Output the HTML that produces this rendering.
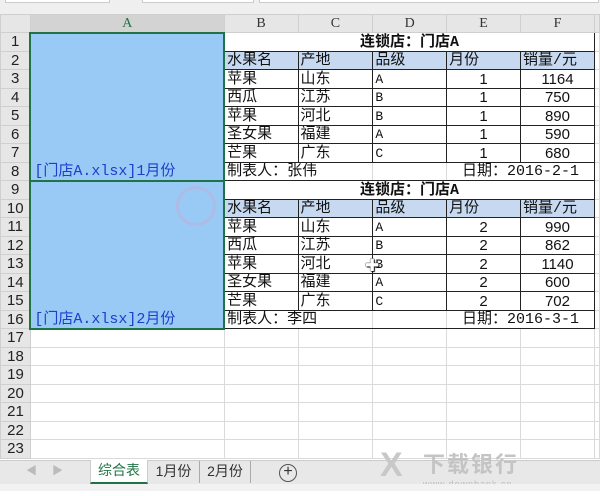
<!DOCTYPE html>
<html><head><meta charset="utf-8"><style>
*{margin:0;padding:0;box-sizing:border-box}
body{width:600px;height:491px;overflow:hidden;background:#fff;position:relative;font-family:"Liberation Mono","Noto Sans CJK SC",monospace;font-size:15px;color:#111}
#top{position:absolute;left:0;top:0;width:600px;height:14px;background:#efefef}
#top div{position:absolute;top:0;height:3px;background:#fff;border:1px solid #ccc;border-top:none}
table{position:absolute;left:0;top:14px;border-collapse:collapse;table-layout:fixed}
td{height:18.5px;border:1px solid #dadada;padding:1px 2px 0;white-space:nowrap;overflow:hidden;line-height:15px;vertical-align:middle}
td *{line-height:15px}
tr.h td{height:18px;background:#e6e6e6;text-align:center;font-family:"Liberation Serif",serif;font-size:14px;color:#333;border-color:#cfcfcf;padding:0}
td.rh{background:#e6e6e6;text-align:center;font-family:"Liberation Sans",sans-serif;font-size:15px;color:#222;border-color:#cfcfcf;padding:0}
td.sel{background:#99c9f5;border:2px solid #217346;vertical-align:bottom;color:#1c3fcc;padding:0 2px 1px 3px}
td.b{border:1px solid #222}
td.hd{background:#c6d9f1}
td.t{text-align:center;font-weight:bold}
td.n{text-align:center;font-family:"Liberation Sans",sans-serif}
td.l{font-family:"Liberation Mono",monospace;font-size:13px}
td.bt{border-top:1.5px solid #222}
td.br{border-right:1.5px solid #222}
td.bl{border-left:1.5px solid #222}
#tabs{position:absolute;left:0;top:460px;width:600px;height:24px;background:#e8e8e8;border-top:1px solid #ccc;font-family:"Liberation Sans","Noto Sans CJK SC",sans-serif;font-size:14px;color:#333}
#tabs span{position:absolute;top:0;height:22px;line-height:20px;text-align:center}
#status{position:absolute;left:0;top:484px;width:600px;height:7px;background:#f2f2f2}
</style></head><body>
<div id="top"><div style="left:5px;width:105px"></div><div style="left:142px;width:112px"></div><div style="left:259px;width:340px"></div></div>
<table>
<colgroup><col style="width:30px"><col style="width:194px"><col style="width:74px"><col style="width:75px"><col style="width:74px"><col style="width:74px"><col style="width:74px"><col style="width:5px"></colgroup>
<tr class="h"><td></td><td style="background:#d3d3d3;color:#217346;border-bottom:2px solid #217346">A</td><td>B</td><td>C</td><td>D</td><td>E</td><td>F</td><td></td></tr>
<tr><td class="rh">1</td><td class="sel" rowspan="8">[门店A.xlsx]1月份</td><td class="t bl br bt" colspan="5" style="border-bottom:1px solid #222">连锁店：门店A</td><td></td></tr>
<tr><td class="rh">2</td><td class="b hd bl">水果名</td><td class="b hd">产地</td><td class="b hd">品级</td><td class="b hd">月份</td><td class="b hd br">销量/元</td><td></td></tr>
<tr><td class="rh">3</td><td class="b bl">苹果</td><td class="b">山东</td><td class="b l">A</td><td class="b n">1</td><td class="b n br">1164</td><td></td></tr>
<tr><td class="rh">4</td><td class="b bl">西瓜</td><td class="b">江苏</td><td class="b l">B</td><td class="b n">1</td><td class="b n br">750</td><td></td></tr>
<tr><td class="rh">5</td><td class="b bl">苹果</td><td class="b">河北</td><td class="b l">B</td><td class="b n">1</td><td class="b n br">890</td><td></td></tr>
<tr><td class="rh">6</td><td class="b bl">圣女果</td><td class="b">福建</td><td class="b l">A</td><td class="b n">1</td><td class="b n br">590</td><td></td></tr>
<tr><td class="rh">7</td><td class="b bl">芒果</td><td class="b">广东</td><td class="b l">C</td><td class="b n">1</td><td class="b n br">680</td><td></td></tr>
<tr><td class="rh">8</td><td class="bl" colspan="2" style="border-bottom:1px solid #222">制表人：张伟</td><td style="border-bottom:1px solid #222"></td><td class="br" colspan="2" style="text-align:center;border-bottom:1px solid #222">日期：2016-2-1</td><td></td></tr>
<tr><td class="rh">9</td><td class="sel" rowspan="8">[门店A.xlsx]2月份</td><td class="t bl br bt" colspan="5" style="border-bottom:1px solid #222">连锁店：门店A</td><td></td></tr>
<tr><td class="rh">10</td><td class="b hd bl">水果名</td><td class="b hd">产地</td><td class="b hd">品级</td><td class="b hd">月份</td><td class="b hd br">销量/元</td><td></td></tr>
<tr><td class="rh">11</td><td class="b bl">苹果</td><td class="b">山东</td><td class="b l">A</td><td class="b n">2</td><td class="b n br">990</td><td></td></tr>
<tr><td class="rh">12</td><td class="b bl">西瓜</td><td class="b">江苏</td><td class="b l">B</td><td class="b n">2</td><td class="b n br">862</td><td></td></tr>
<tr><td class="rh">13</td><td class="b bl">苹果</td><td class="b">河北</td><td class="b l">B</td><td class="b n">2</td><td class="b n br">1140</td><td></td></tr>
<tr><td class="rh">14</td><td class="b bl">圣女果</td><td class="b">福建</td><td class="b l">A</td><td class="b n">2</td><td class="b n br">600</td><td></td></tr>
<tr><td class="rh">15</td><td class="b bl">芒果</td><td class="b">广东</td><td class="b l">C</td><td class="b n">2</td><td class="b n br">702</td><td></td></tr>
<tr><td class="rh">16</td><td class="bl" colspan="2" style="border-bottom:1.5px solid #222">制表人：李四</td><td style="border-bottom:1.5px solid #222"></td><td class="br" colspan="2" style="text-align:center;border-bottom:1.5px solid #222">日期：2016-3-1</td><td></td></tr>
<tr><td class="rh">17</td><td></td><td></td><td></td><td></td><td></td><td></td><td></td></tr>
<tr><td class="rh">18</td><td></td><td></td><td></td><td></td><td></td><td></td><td></td></tr>
<tr><td class="rh">19</td><td></td><td></td><td></td><td></td><td></td><td></td><td></td></tr>
<tr><td class="rh">20</td><td></td><td></td><td></td><td></td><td></td><td></td><td></td></tr>
<tr><td class="rh">21</td><td></td><td></td><td></td><td></td><td></td><td></td><td></td></tr>
<tr><td class="rh">22</td><td></td><td></td><td></td><td></td><td></td><td></td><td></td></tr>
<tr><td class="rh">23</td><td></td><td></td><td></td><td></td><td></td><td></td><td></td></tr>
</table>
<div style="position:absolute;left:176px;top:186px;width:40px;height:40px;border-radius:50%;border:3px solid rgba(200,170,210,.45)"></div>
<div style="position:absolute;left:365px;top:256px;font-size:17px;color:#fff;text-shadow:0 0 1px #000,0 0 1px #000,1px 1px 1px #000;font-family:'DejaVu Sans',sans-serif;font-weight:bold">✚</div>
<div id="tabs">
<span style="left:26px;color:#bbb;font-size:11px">◀</span><span style="left:52px;color:#bbb;font-size:11px">▶</span>
<span style="left:90px;width:58px;background:#fff;color:#217346;border-bottom:2px solid #217346;border-left:1px solid #ccc;border-right:1px solid #ccc;top:-1px;height:24px">综合表</span>
<span style="left:148px;width:52px;border-right:1px solid #aaa">1月份</span>
<span style="left:200px;width:51px;border-right:1px solid #aaa">2月份</span>
<span style="left:279px;top:3px;width:18px;height:18px;border:1.5px solid #555;border-radius:50%;line-height:14px;font-size:16px">+</span>
<span style="left:380px;top:-6px;font-size:34px;color:#c8c8c8;font-weight:bold">X</span>
<span style="left:423px;top:-6px;font-size:22px;color:#c4c4c4;font-weight:bold;letter-spacing:2px">下载银行</span>
<span style="left:423px;top:13px;font-size:9px;color:#bbb;letter-spacing:1px">www.downbank.cn</span>
</div>
<div id="status"></div>
</body></html>
